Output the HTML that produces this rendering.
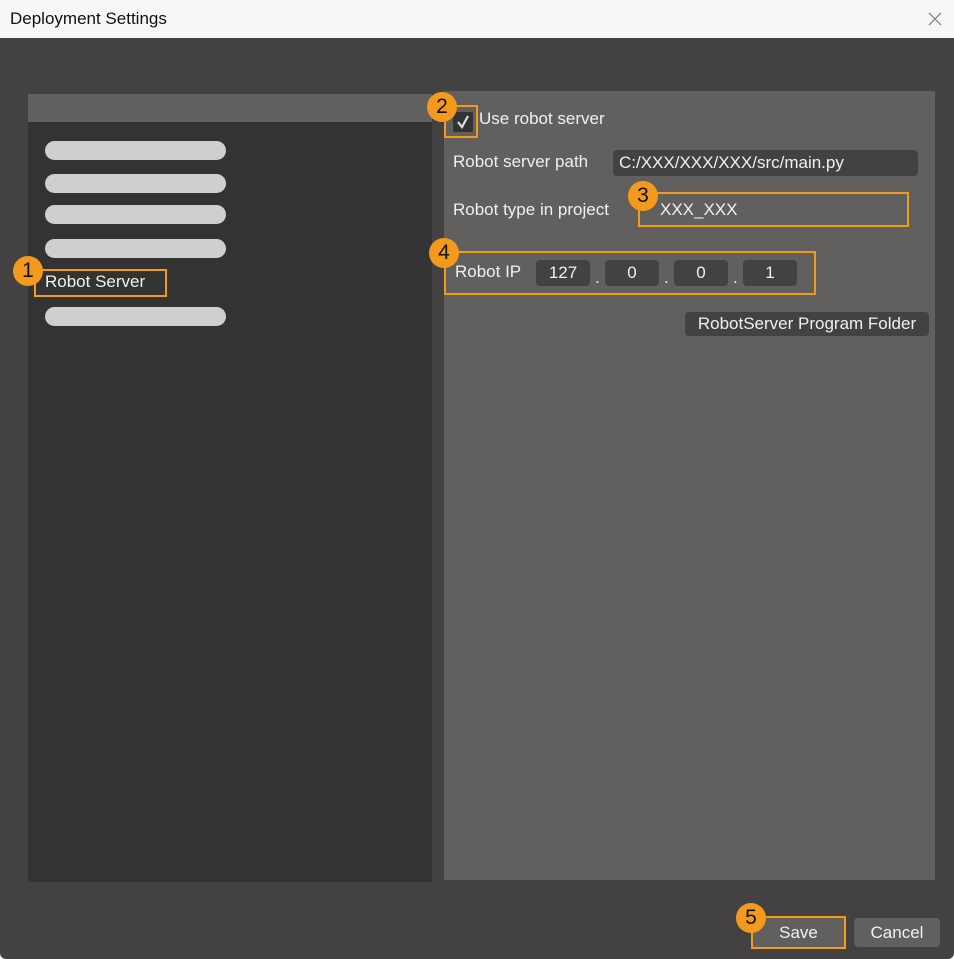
<!DOCTYPE html>
<html><head><style>
*{margin:0;padding:0;box-sizing:border-box}
body{width:954px;height:959px;background:#fff;font-family:"Liberation Sans",sans-serif;position:relative;overflow:hidden}
.a{position:absolute}
.title{left:0;top:0;width:954px;height:38px;background:#f7f7f7;color:#111;font-size:17px;line-height:38px;padding-left:10px}
.body{left:0;top:38px;width:954px;height:921px;background:#434142;border-radius:0 0 6px 6px}
.bar{left:45px;width:181px;height:19px;background:#cfcfcf;border-radius:10px}
.ob{border:2px solid #f39a1d}
.c{width:30px;height:30px;border-radius:50%;background:#f39a1d;color:#111;font-size:21px;line-height:30px;text-align:center}
.t{color:#f0f0f0;font-size:17px}
.f{background:#434142;border-radius:4px;color:#f0f0f0;font-size:17px;text-align:center;line-height:26px}
</style></head><body>
<div class="a title">Deployment Settings</div>
<svg class="a" style="left:928px;top:12px" width="14" height="14"><path d="M1 1L13 13M13 1L1 13" stroke="#888" stroke-width="1.3"/></svg>
<div class="a body"></div>
<div class="a" style="left:28px;top:94px;width:404px;height:788px;background:#333"></div>
<div class="a" style="left:28px;top:94px;width:404px;height:28px;background:#62605e"></div>
<div class="a bar" style="top:141px"></div>
<div class="a bar" style="top:174px"></div>
<div class="a bar" style="top:205px"></div>
<div class="a bar" style="top:239px"></div>
<div class="a bar" style="top:307px"></div>
<div class="a ob" style="left:34px;top:269px;width:133px;height:28px"></div>
<div class="a t" style="left:45px;top:272px">Robot Server</div>
<div class="a c" style="left:13px;top:256px">1</div>

<div class="a" style="left:444px;top:91px;width:491px;height:789px;background:#62605e"></div>
<div class="a ob" style="left:444px;top:105px;width:34px;height:33px"></div>
<div class="a" style="left:453px;top:112px;width:20px;height:20px;background:#333;border-radius:2px"></div>
<svg class="a" style="left:453px;top:112px" width="20" height="20"><path d="M5 10L9 15L15 4" stroke="#ddd" stroke-width="2.2" fill="none"/></svg>
<div class="a c" style="left:427px;top:92px">2</div>
<div class="a t" style="left:479px;top:109px">Use robot server</div>
<div class="a t" style="left:453px;top:152px">Robot server path</div>
<div class="a f" style="left:613px;top:150px;width:305px;text-align:left;padding-left:6px">C:/XXX/XXX/XXX/src/main.py</div>
<div class="a t" style="left:453px;top:200px">Robot type in project</div>
<div class="a ob" style="left:638px;top:192px;width:271px;height:35px"></div>
<div class="a t" style="left:660px;top:200px">XXX_XXX</div>
<div class="a c" style="left:628px;top:181px">3</div>
<div class="a ob" style="left:444px;top:251px;width:372px;height:44px"></div>
<div class="a c" style="left:429px;top:238px">4</div>
<div class="a t" style="left:455px;top:262px">Robot IP</div>
<div class="a f" style="left:536px;top:260px;width:54px">127</div>
<div class="a f" style="left:605px;top:260px;width:54px">0</div>
<div class="a f" style="left:674px;top:260px;width:54px">0</div>
<div class="a f" style="left:743px;top:260px;width:54px">1</div>
<div class="a t" style="left:595px;top:268px">.</div>
<div class="a t" style="left:664px;top:268px">.</div>
<div class="a t" style="left:733px;top:268px">.</div>
<div class="a f" style="left:685px;top:312px;width:244px;height:24px;line-height:24px;background:#434142">RobotServer Program Folder</div>

<div class="a f" style="left:753px;top:918px;width:91px;height:29px;line-height:29px;background:#62605e;border-radius:0">Save</div>
<div class="a ob" style="left:751px;top:916px;width:95px;height:33px"></div>
<div class="a c" style="left:736px;top:903px">5</div>
<div class="a f" style="left:854px;top:918px;width:86px;height:29px;line-height:29px;background:#62605e">Cancel</div>
</body></html>
